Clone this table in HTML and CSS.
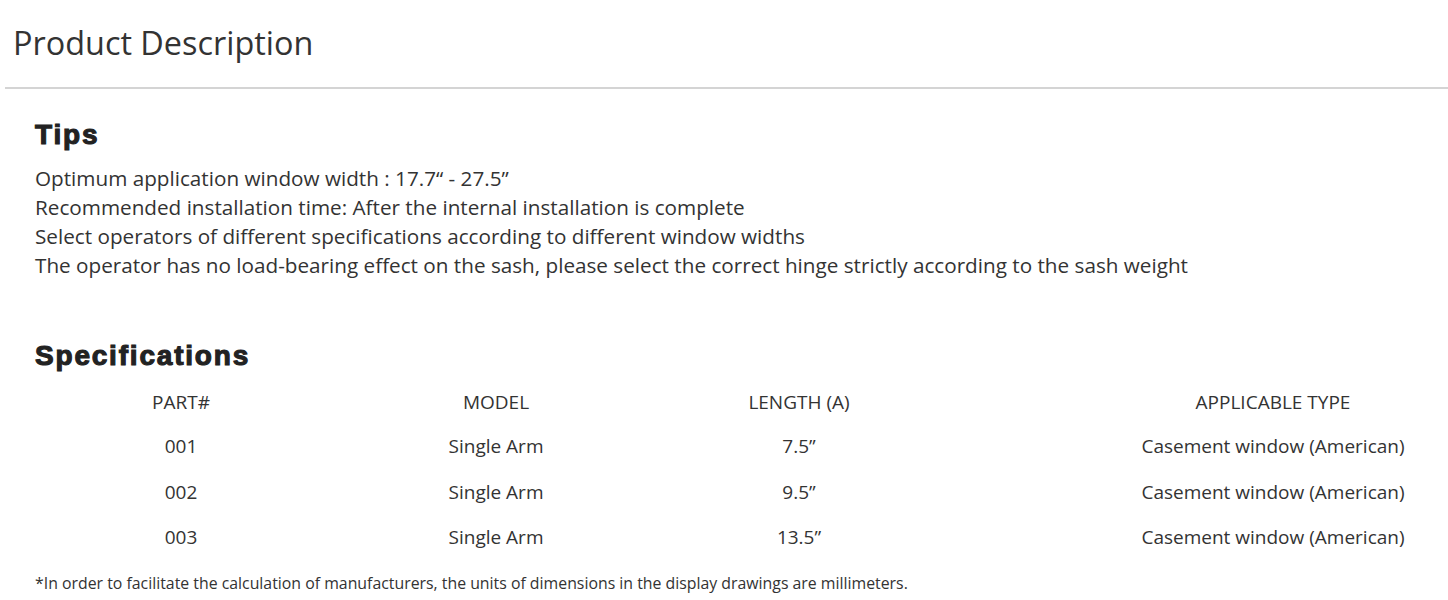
FILE: index.html
```html
<!DOCTYPE html>
<html lang="en">
  <head>
    <meta charset="UTF-8" />
    <meta name="viewport" content="width=device-width, initial-scale=1.0" />
    <title>Product Description</title>
    <link rel="stylesheet" href="styles.css">
  </head>
  <body>
    <div class="page">
      <div class="page-header">
        <h1>Product Description</h1>
      </div>

      <div class="content">
        <h2>Tips</h2>
        <div class="tips">
          <p>Optimum application window width : 17.7“ - 27.5”</p>
          <p>Recommended installation time: After the internal installation is complete</p>
          <p>Select operators of different specifications according to different window widths</p>
          <p>The operator has no load-bearing effect on the sash, please select the correct hinge strictly according to the sash weight</p>
        </div>

        <h2 class="spec-title">Specifications</h2>
        <div class="spec-table">
          <div class="cell head">PART#</div>
          <div class="cell head">MODEL</div>
          <div class="cell head">LENGTH (A)</div>
          <div class="cell head type">APPLICABLE TYPE</div>

          <div class="cell">001</div>
          <div class="cell">Single Arm</div>
          <div class="cell">7.5”</div>
          <div class="cell type">Casement window (American)</div>

          <div class="cell">002</div>
          <div class="cell">Single Arm</div>
          <div class="cell">9.5”</div>
          <div class="cell type">Casement window (American)</div>

          <div class="cell">003</div>
          <div class="cell">Single Arm</div>
          <div class="cell">13.5”</div>
          <div class="cell type">Casement window (American)</div>
        </div>

        <p class="note">*In order to facilitate the calculation of manufacturers, the units of dimensions in the display drawings are millimeters.</p>
      </div>
    </div>
  </body>
</html>
```

FILE: styles.css
```css
* {
  margin: 0;
  padding: 0;
  box-sizing: border-box;
}

body {
  background-color: #fff;
  color: #333;
  font-family: "Open Sans", "Liberation Sans", sans-serif;
  overflow: hidden;
}

.page {
  padding-left: 5px;
}

.page-header {
  border-bottom: 2px solid #d4d4d4;
  padding: 18px 0 21px 8px;
}

.page-header > h1 {
  font-size: 32.4px;
  font-weight: 400;
  line-height: 48px;
  color: #333;
}

.content {
  padding: 28px 0 0 30px;
}

.content > h2 {
  font-family: "Liberation Sans", Arial, sans-serif;
  font-weight: 700;
  font-size: 28px;
  line-height: 36px;
  letter-spacing: 1.8px;
  color: #222;
  -webkit-text-stroke: 1.1px #222;
}

.tips {
  padding-top: 11px;
}

.tips > p {
  font-size: 20.7px;
  line-height: 29px;
}

.spec-title {
  margin-top: 58px;
}

/* Specifications table */

.spec-table {
  display: grid;
  grid-template-columns: 292px 338px 268px 1fr;
  font-size: 19px;
  padding-top: 6px;
}

.cell {
  text-align: center;
  line-height: 45.5px;
}

.cell.head {
  line-height: 44px;
}

.cell.type {
  justify-self: end;
  width: 350px;
}

.note {
  font-size: 15.85px;
  line-height: 20px;
  padding-top: 12px;
}
```
